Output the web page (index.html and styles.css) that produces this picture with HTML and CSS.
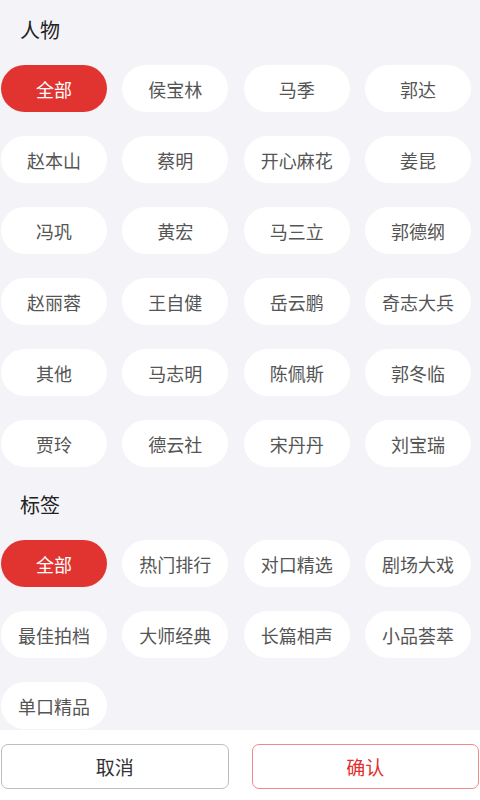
FILE: index.html
```html
<!DOCTYPE html>
<html lang="zh-CN">

<head>
    <meta charset="UTF-8">
    <meta name="viewport" content="width=device-width, initial-scale=1.0">
    <title>筛选</title>
    <link rel="stylesheet" href="styles.css">
</head>

<body>
    <div class="page">
        <div class="content">
            <!-- 人物 -->
            <div class="section">
                <h3 class="section-title">人物</h3>
                <div class="tag-grid">
                    <span class="tag active">全部</span>
                    <span class="tag">侯宝林</span>
                    <span class="tag">马季</span>
                    <span class="tag">郭达</span>
                    <span class="tag">赵本山</span>
                    <span class="tag">蔡明</span>
                    <span class="tag">开心麻花</span>
                    <span class="tag">姜昆</span>
                    <span class="tag">冯巩</span>
                    <span class="tag">黄宏</span>
                    <span class="tag">马三立</span>
                    <span class="tag">郭德纲</span>
                    <span class="tag">赵丽蓉</span>
                    <span class="tag">王自健</span>
                    <span class="tag">岳云鹏</span>
                    <span class="tag">奇志大兵</span>
                    <span class="tag">其他</span>
                    <span class="tag">马志明</span>
                    <span class="tag">陈佩斯</span>
                    <span class="tag">郭冬临</span>
                    <span class="tag">贾玲</span>
                    <span class="tag">德云社</span>
                    <span class="tag">宋丹丹</span>
                    <span class="tag">刘宝瑞</span>
                </div>
            </div>

            <!-- 标签 -->
            <div class="section">
                <h3 class="section-title">标签</h3>
                <div class="tag-grid">
                    <span class="tag active">全部</span>
                    <span class="tag">热门排行</span>
                    <span class="tag">对口精选</span>
                    <span class="tag">剧场大戏</span>
                    <span class="tag">最佳拍档</span>
                    <span class="tag">大师经典</span>
                    <span class="tag">长篇相声</span>
                    <span class="tag">小品荟萃</span>
                    <span class="tag">单口精品</span>
                </div>
            </div>
        </div>

        <div class="footer">
            <button class="btn btn-cancel">取消</button>
            <button class="btn btn-confirm">确认</button>
        </div>
    </div>
</body>

</html>
```

FILE: styles.css
```css
* {
    margin: 0;
    padding: 0;
    box-sizing: border-box;
}

body {
    font-family: "Noto Sans CJK SC", "Noto Sans", sans-serif;
    background-color: #f4f4f8;
}

.page {
    display: flex;
    flex-direction: column;
    height: 100vh;
}

.content {
    flex: 1;
    overflow: hidden;
}

.section {
    margin-bottom: 8px;
}

.section-title {
    height: 65px;
    padding: 15px 0 0 20px;
    font-size: 20px;
    font-weight: normal;
    line-height: 30px;
    color: #222;
}

.tag-grid {
    display: grid;
    grid-template-columns: repeat(4, 106px);
    column-gap: 15.33px;
    row-gap: 24px;
    padding-left: 1px;
}

.tag {
    height: 47px;
    display: flex;
    justify-content: center;
    align-items: center;
    background-color: #fff;
    border-radius: 24px;
    font-size: 18px;
    color: #555;
    white-space: nowrap;
}

.tag.active {
    background-color: #e13431;
    color: #fff;
}

.footer {
    height: 70px;
    background-color: #fff;
    display: grid;
    grid-template-columns: 1fr 1fr;
    column-gap: 23px;
    padding: 14px 1px 11px 1px;
}

.btn {
    font-family: inherit;
    font-size: 19px;
    background-color: #fff;
    border-radius: 7px;
    cursor: pointer;
}

.btn-cancel {
    border: 1px solid #bdbdbd;
    color: #333;
}

.btn-confirm {
    border: 1px solid #ef8a88;
    color: #e0302d;
}
```
